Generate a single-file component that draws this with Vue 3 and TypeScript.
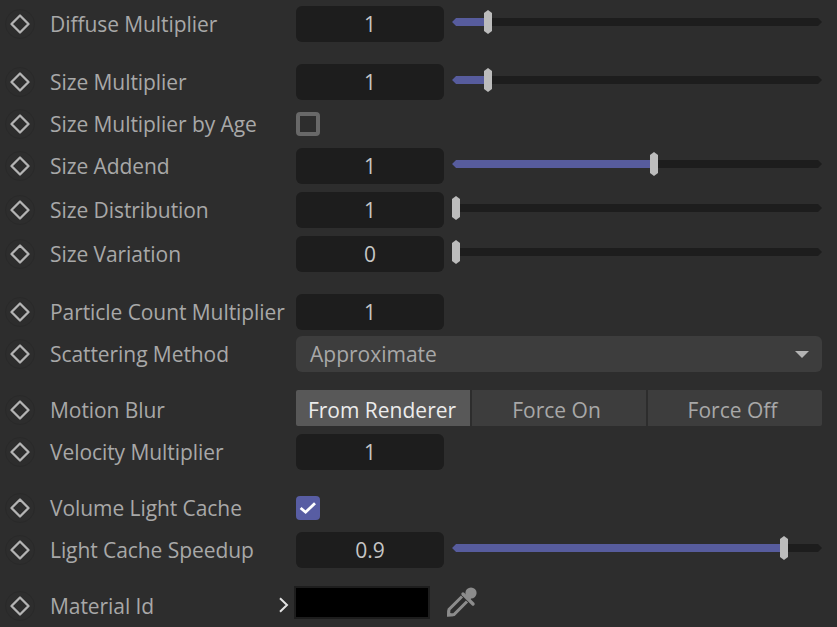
<script setup lang="ts">
type Row = {
  label: string
  kind: 'slider' | 'field' | 'check' | 'select' | 'segment' | 'color'
  gap: number
  value?: string
  thumb?: number
  checked?: boolean
}

const rows: Row[] = [
  { label: 'Diffuse Multiplier', kind: 'slider', gap: 6, value: '1', thumb: 32 },
  { label: 'Size Multiplier', kind: 'slider', gap: 22, value: '1', thumb: 32 },
  { label: 'Size Multiplier by Age', kind: 'check', gap: 12, checked: false },
  { label: 'Size Addend', kind: 'slider', gap: 12, value: '1', thumb: 198 },
  { label: 'Size Distribution', kind: 'slider', gap: 8, value: '1', thumb: 0 },
  { label: 'Size Variation', kind: 'slider', gap: 8, value: '0', thumb: 0 },
  { label: 'Particle Count Multiplier', kind: 'field', gap: 22, value: '1' },
  { label: 'Scattering Method', kind: 'select', gap: 6, value: 'Approximate' },
  { label: 'Motion Blur', kind: 'segment', gap: 18 },
  { label: 'Velocity Multiplier', kind: 'field', gap: 8, value: '1' },
  { label: 'Volume Light Cache', kind: 'check', gap: 26, checked: true },
  { label: 'Light Cache Speedup', kind: 'slider', gap: 12, value: '0.9', thumb: 328 },
  { label: 'Material Id', kind: 'color', gap: 18 },
]

const segments = ['From Renderer', 'Force On', 'Force Off']
</script>

<template>
  <div class="panel">
    <div v-for="row in rows" :key="row.label" class="row" :class="[`gap-${row.gap}`, `row-${row.kind}`]">
      <span class="key">
        <svg width="20" height="20" viewBox="0 0 20 20" aria-hidden="true">
          <path d="M10 1.5 18.5 10 10 18.5 1.5 10Z" fill="none" stroke="#b4b4b4" stroke-width="2.3" stroke-linejoin="round" />
        </svg>
      </span>
      <span class="label">{{ row.label }}</span>

      <div class="control">
        <template v-if="row.kind === 'slider' || row.kind === 'field'">
          <div class="field">{{ row.value }}</div>
          <div v-if="row.kind === 'slider'" class="slider">
            <div class="track"></div>
            <div class="fill" :style="{ width: `${row.thumb}px` }"></div>
            <div class="thumb" :style="{ left: `${row.thumb}px` }"></div>
          </div>
        </template>

        <div v-else-if="row.kind === 'check'" class="check" :class="{ on: row.checked }">
          <svg v-if="row.checked" width="18" height="18" viewBox="0 0 18 18" aria-hidden="true">
            <path d="M1.6 9 6.6 13.2 16 4.2" fill="none" stroke="#fff" stroke-width="2.8" />
          </svg>
        </div>

        <div v-else-if="row.kind === 'select'" class="select">
          <span>{{ row.value }}</span>
          <i class="caret"></i>
        </div>

        <div v-else-if="row.kind === 'segment'" class="segments">
          <div v-for="(s, i) in segments" :key="s" class="segment" :class="{ active: i === 0 }">{{ s }}</div>
        </div>

        <div v-else class="color-wrap">
          <svg class="chevron" width="12" height="16" viewBox="0 0 12 16" aria-hidden="true">
            <path d="M2 1.2 9 8 2 14.8" fill="none" stroke="#e2e2e2" stroke-width="2" />
          </svg>
          <div class="swatch"></div>
          <svg class="dropper" width="32" height="33" viewBox="0 0 32 33" aria-hidden="true">
            <path d="M15 10.5 2 23.5 1.5 29 7 28.5 20 15.5" fill="none" stroke="#8c8c8c" stroke-width="3" />
            <path d="M0.3 24 6.5 30.3 0.3 30.3Z" fill="#8c8c8c" />
            <path d="M16 8 26 18" fill="none" stroke="#8c8c8c" stroke-width="3.4" stroke-linecap="round" />
            <path d="M20.5 12.5 24 7" fill="none" stroke="#8c8c8c" stroke-width="6" />
            <circle cx="24" cy="7" r="5.6" fill="#8c8c8c" />
          </svg>
        </div>
      </div>
    </div>
  </div>
</template>

<style>
html, body { margin: 0; background: #2d2d2d; }
</style>

<style scoped>
.panel {
  width: 837px;
  height: 627px;
  overflow: hidden;
  background: #2d2d2d;
  font-family: "Open Sans", "Noto Sans", sans-serif;
  font-size: 21px;
  color: #a8a8a8;
}
.row { display: flex; align-items: center; height: 36px; }
.row-check { height: 24px; }
.row-color { height: 33px; }
.gap-6 { margin-top: 6px; }
.gap-8 { margin-top: 8px; }
.gap-12 { margin-top: 12px; }
.gap-18 { margin-top: 18px; }
.gap-22 { margin-top: 22px; }
.gap-26 { margin-top: 26px; }
.key {
  flex: none;
  width: 30px;
  height: 30px;
  margin-left: 5px;
  margin-right: 15px;
  box-sizing: border-box;
  border: 1px solid #292929;
  border-radius: 50%;
  display: flex;
  align-items: center;
  justify-content: center;
}
.label {
  flex: none;
  width: 246px;
  white-space: nowrap;
  letter-spacing: -0.07px;
}
.row-segment .key, .row-segment .label { margin-top: 4px; }
.row-color .key, .row-color .label { margin-top: 7px; }
.control { flex: none; width: 526px; display: flex; align-items: center; }
.field {
  flex: none;
  width: 148px;
  height: 36px;
  line-height: 36px;
  text-align: center;
  background: #1d1d1d;
  border-radius: 6px;
  color: #c6c6c6;
}
.slider { position: relative; flex: none; width: 370px; height: 24px; margin-left: 8px; margin-top: -4px; }
.track {
  position: absolute;
  inset: 8px 0;
  background: #1d1d1d;
  clip-path: polygon(0 50%, 4px 0, calc(100% - 4px) 0, 100% 50%, calc(100% - 4px) 100%, 4px 100%);
}
.fill {
  position: absolute;
  left: 0;
  top: 8px;
  height: 8px;
  background: #575c9d;
  clip-path: polygon(0 50%, 4px 0, 100% 0, 100% 100%, 4px 100%);
}
.thumb {
  position: absolute;
  top: 0;
  width: 8px;
  height: 24px;
  background: #bcbcbc;
  clip-path: polygon(50% 0, 100% 3px, 100% 21px, 50% 100%, 0 21px, 0 3px);
}
.check {
  width: 24px;
  height: 24px;
  box-sizing: border-box;
  border: 4px solid #686868;
  border-radius: 4px;
  display: flex;
  align-items: center;
  justify-content: center;
}
.check.on { background: #585da3; border: 0; }
.select {
  width: 526px;
  height: 36px;
  box-sizing: border-box;
  padding: 0 13px 0 14px;
  background: #3d3d3d;
  border-radius: 6px;
  display: flex;
  align-items: center;
  justify-content: space-between;
}
.caret {
  width: 0;
  height: 0;
  border-left: 7px solid transparent;
  border-right: 7px solid transparent;
  border-top: 7px solid #b4b4b4;
}
.segments { width: 526px; height: 36px; display: flex; gap: 2px; }
.segment {
  flex: none;
  width: 174px;
  height: 36px;
  box-sizing: border-box;
  padding: 0 5px 0 0;
  line-height: 40px;
  text-align: center;
  background: #3d3d3d;
  overflow: hidden;
}
.segment:first-child { border-radius: 2px 0 0 2px; padding-right: 2px; }
.segment:last-child { border-radius: 0 2px 2px 0; }
.segment.active { background: #585858; color: #ececec; }
.color-wrap { position: relative; display: flex; align-items: center; height: 33px; }
.chevron { position: absolute; left: -18px; top: 11px; }
.swatch {
  width: 136px;
  height: 33px;
  box-sizing: border-box;
  margin-left: -2px;
  background: #000;
  border: 2px solid #1d1d1d;
}
.dropper { margin-left: 17px; }
</style>
